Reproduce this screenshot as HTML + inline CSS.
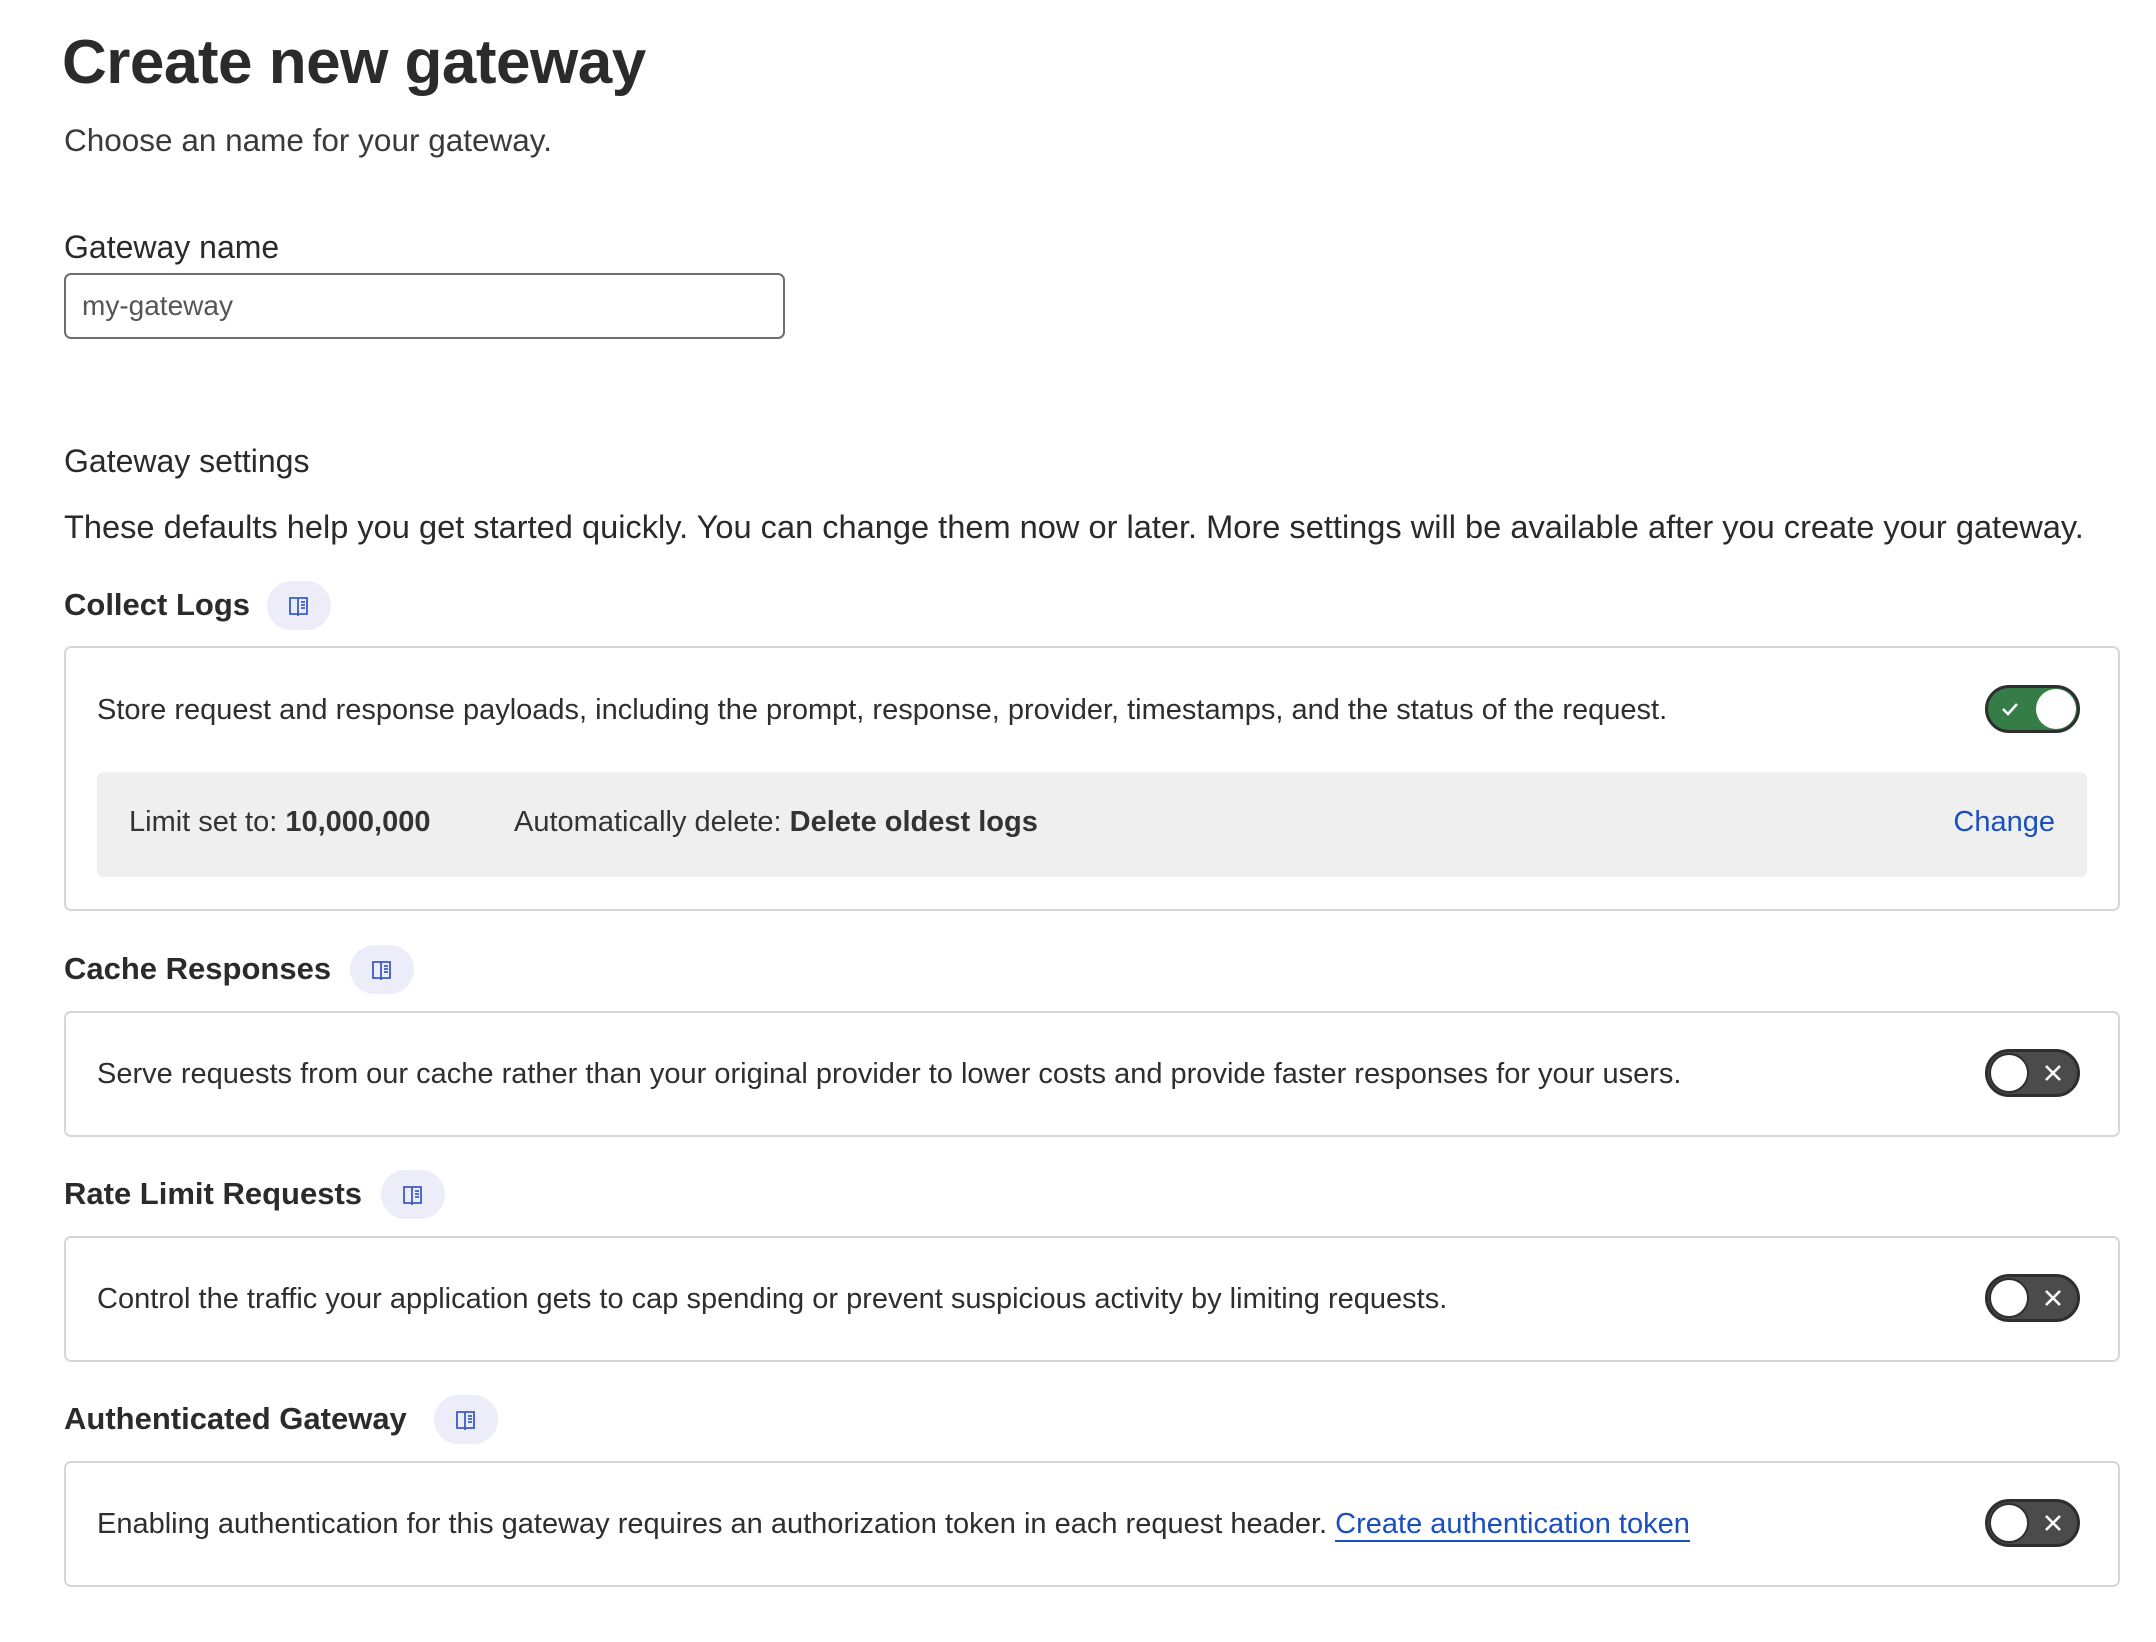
<!DOCTYPE html>
<html><head><meta charset="utf-8"><style>
*{box-sizing:border-box;margin:0;padding:0}
body{width:2156px;height:1642px;background:#fff;font-family:"Liberation Sans",Arial,sans-serif;color:#2a2a2a;position:relative;overflow:hidden}
.a{position:absolute;white-space:nowrap}
h1{position:absolute;left:62px;top:27px;font-size:62px;font-weight:700;color:#2b2b2b;letter-spacing:-0.5px}
.sub{left:64px;top:122px;font-size:31.5px;color:#3a3a3a}
.lbl{font-size:32px;color:#2a2a2a}
.input{position:absolute;left:64px;top:273px;width:721px;height:66px;border:2px solid #6e6e6e;border-radius:7px;font-size:28px;color:#555;padding:15px 0 0 16px}
.hd{font-size:31px;font-weight:700;color:#2b2b2b}
.pill{position:absolute;width:64px;height:49px;border-radius:25px;background:#ecedf9;display:flex;align-items:center;justify-content:center}
.card{position:absolute;left:64px;width:2056px;border:2px solid #d6d6d6;border-radius:7px}
.ct{font-size:29px;color:#2e2e2e}
.tg{position:absolute;left:1985px;width:95px;height:48px;border-radius:24px;border:3px solid #2e2e2e}
.tg.on{background:#367c47}
.tg.off{background:#4b4b4b}
.knob{position:absolute;top:1px;width:40px;height:40px;border-radius:50%;background:#fff}
a{color:#1a4fbf;text-decoration:none}
</style></head><body>
<h1>Create new gateway</h1>
<div class="a sub">Choose an name for your gateway.</div>
<div class="a lbl" style="left:64px;top:229px">Gateway name</div>
<div class="input">my-gateway</div>
<div class="a lbl" style="left:64px;top:443px">Gateway settings</div>
<div class="a" style="left:64px;top:508px;font-size:32.6px;color:#2a2a2a">These defaults help you get started quickly. You can change them now or later. More settings will be available after you create your gateway.</div>

<!-- Collect logs -->
<div class="a hd" style="left:64px;top:587px">Collect Logs</div>
<div class="pill" style="left:267px;top:581px"><svg width="24" height="24" viewBox="0 0 24 24" fill="none" stroke="#3b5bc9" stroke-width="1.8"><path d="M3 4h8v16H3zM11 4h9v16h-9"/><path d="M14 8h4M14 11h4M14 14h4"/><path d="M11 20v2"/></svg></div>
<div class="card" style="top:646px;height:265px">
<div class="a ct" style="left:31px;top:46px">Store request and response payloads, including the prompt, response, provider, timestamps, and the status of the request.</div>
<div style="position:absolute;left:31px;top:124px;width:1990px;height:105px;background:#efefef;border-radius:7px">
<div class="a ct" style="left:32px;top:34px;color:#333">Limit set to: <b>10,000,000</b></div>
<div class="a ct" style="left:417px;top:34px;color:#333">Automatically delete: <b>Delete oldest logs</b></div>
<div class="a ct" style="right:32px;top:34px"><a>Change</a></div>
</div>
</div>
<div class="tg on" style="top:685px"><svg style="position:absolute;left:12px;top:12px" width="20" height="18" viewBox="0 0 20 18"><path d="M3 9l5 5 9-10" fill="none" stroke="#fff" stroke-width="2.6"/></svg><div class="knob" style="right:1px"></div></div>

<!-- Cache -->
<div class="a hd" style="left:64px;top:951px">Cache Responses</div>
<div class="pill" style="left:350px;top:945px"><svg width="24" height="24" viewBox="0 0 24 24" fill="none" stroke="#3b5bc9" stroke-width="1.8"><path d="M3 4h8v16H3zM11 4h9v16h-9"/><path d="M14 8h4M14 11h4M14 14h4"/><path d="M11 20v2"/></svg></div>
<div class="card" style="top:1011px;height:126px"><div class="a ct" style="left:31px;top:45px">Serve requests from our cache rather than your original provider to lower costs and provide faster responses for your users.</div></div>
<div class="tg off" style="top:1049px"><div class="knob" style="left:1px;border:2px solid #2e2e2e"></div><svg style="position:absolute;left:55px;top:11px" width="20" height="20" viewBox="0 0 20 20"><path d="M3 3l14 14M17 3L3 17" stroke="#fff" stroke-width="2.6"/></svg></div>

<!-- Rate -->
<div class="a hd" style="left:64px;top:1176px">Rate Limit Requests</div>
<div class="pill" style="left:381px;top:1170px"><svg width="24" height="24" viewBox="0 0 24 24" fill="none" stroke="#3b5bc9" stroke-width="1.8"><path d="M3 4h8v16H3zM11 4h9v16h-9"/><path d="M14 8h4M14 11h4M14 14h4"/><path d="M11 20v2"/></svg></div>
<div class="card" style="top:1236px;height:126px"><div class="a ct" style="left:31px;top:45px">Control the traffic your application gets to cap spending or prevent suspicious activity by limiting requests.</div></div>
<div class="tg off" style="top:1274px"><div class="knob" style="left:1px;border:2px solid #2e2e2e"></div><svg style="position:absolute;left:55px;top:11px" width="20" height="20" viewBox="0 0 20 20"><path d="M3 3l14 14M17 3L3 17" stroke="#fff" stroke-width="2.6"/></svg></div>

<!-- Auth -->
<div class="a hd" style="left:64px;top:1401px">Authenticated Gateway</div>
<div class="pill" style="left:434px;top:1395px"><svg width="24" height="24" viewBox="0 0 24 24" fill="none" stroke="#3b5bc9" stroke-width="1.8"><path d="M3 4h8v16H3zM11 4h9v16h-9"/><path d="M14 8h4M14 11h4M14 14h4"/><path d="M11 20v2"/></svg></div>
<div class="card" style="top:1461px;height:126px"><div class="a ct" style="left:31px;top:45px">Enabling authentication for this gateway requires an authorization token in each request header. <a style="border-bottom:2px solid #1a4fbf">Create authentication token</a></div></div>
<div class="tg off" style="top:1499px"><div class="knob" style="left:1px;border:2px solid #2e2e2e"></div><svg style="position:absolute;left:55px;top:11px" width="20" height="20" viewBox="0 0 20 20"><path d="M3 3l14 14M17 3L3 17" stroke="#fff" stroke-width="2.6"/></svg></div>
</body></html>
